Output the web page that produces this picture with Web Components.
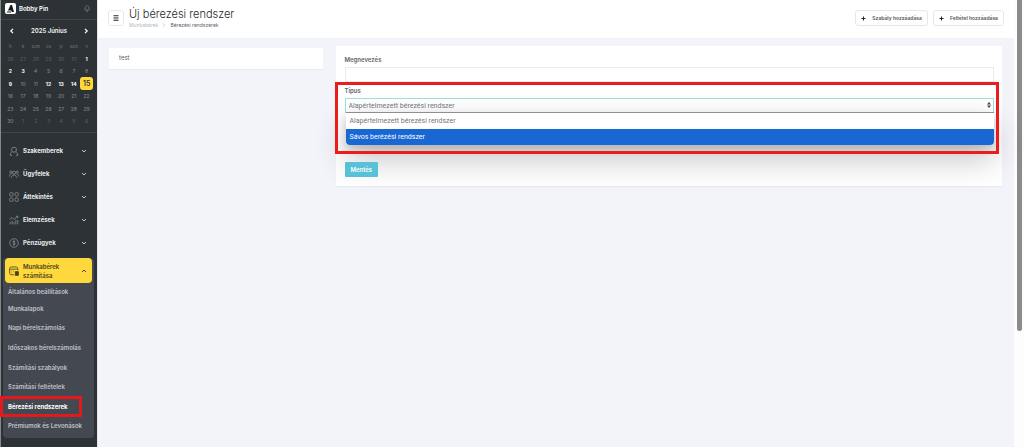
<!DOCTYPE html>
<html lang="hu">
<head>
<meta charset="utf-8">
<title>Új bérezési rendszer</title>
<style>
html,body{margin:0;height:100%;overflow:hidden}
body{font:6px/10px Inter,"Liberation Sans",sans-serif;color:#5b6064;background:#fff}
</style>
</head>
<body>
<app-shell>
  <side-bar slot="side"></side-bar>
  <page-header slot="head" heading="Új bérezési rendszer"></page-header>
  <info-card>test</info-card>
  <wage-form></wage-form>
</app-shell>
<script>
const define = (name, html, setup) => customElements.define(name, class extends HTMLElement {
  connectedCallback() {
    if (this.shadowRoot) return;
    const root = this.attachShadow({mode: 'open'});
    const t = document.createElement('template');
    t.innerHTML = '<style>*{box-sizing:border-box}button,input,select{font:inherit;color:inherit;margin:0}</style>' + html;
    root.append(t.content.cloneNode(true));
    if (setup) setup(this, root);
  }
});

define('app-shell', `
<style>
:host{display:flex;height:100vh;overflow:hidden}
.side{flex:none;width:98px;background:#2d3236;border-left:1px solid #85898c;border-right:1px solid #e4e5ea}
.page{flex:1;min-width:0;display:flex;flex-direction:column;background:#f3f4f9}
main{display:grid;grid-template-columns:repeat(4,minmax(0,1fr));gap:13px;padding:8px 12px 0 11px;align-items:start}
.track{flex:none;width:10px;background:#fdfdfd;padding:0 2px 0 3px}
.thumb{height:74vh;background:#8b8b8b;border-radius:0 0 3px 3px}
</style>
<div class="side"><slot name="side"></slot></div>
<div class="page"><slot name="head"></slot><main><slot></slot></main></div>
<div class="track"><div class="thumb"></div></div>`);

define('month-calendar', `
<style>
:host{display:block;padding:5px 4px 5px 3px;border-bottom:1px solid #3f4448}
header{display:flex;justify-content:space-between;align-items:center;height:12px;padding:0 4px 0 5px;color:#f2f2f3;font-size:6px;font-weight:600}
button{border:0;background:none;padding:0;width:6px;height:10px;display:flex;align-items:center;justify-content:center}
svg{width:6px;height:6px;fill:none;stroke:#fff;stroke-width:1.2}
table{width:100%;table-layout:fixed;border-collapse:collapse;text-align:center;margin-top:2px;color:#7d8287}
th,td{padding:0;height:13px;font-size:5px;font-weight:500;line-height:12px}
th{color:#63686d}
tr:nth-child(even) td{height:12px}
.out{color:#555a5f}
.on{color:#fff;font-weight:700}
.today{color:#33322a;font-weight:600;font-size:7px;background:#ffd83d;border-radius:3px}
</style>
<header><button aria-label="Előző hónap"><svg viewBox="0 0 6 6"><path d="M4 .8 1.8 3 4 5.2"/></svg></button><span>2025 Június</span><button aria-label="Következő hónap"><svg viewBox="0 0 6 6"><path d="M2 .8 4.2 3 2 5.2"/></svg></button></header>
<table><thead><tr><th>h</th><th>k</th><th>sze</th><th>cs</th><th>p</th><th>szo</th><th>v</th></tr></thead><tbody></tbody></table>`, (el, root) => {
  const days = [26,27,28,29,30,31];
  for (let d = 1; d <= 30; d++) days.push(d);
  days.push(1,2,3,4,5,6);
  const bold = [1,2,3,9,12,13,14];
  const body = root.querySelector('tbody');
  for (let r = 0; r < 6; r++) {
    const tr = body.insertRow();
    for (let c = 0; c < 7; c++) {
      const i = r * 7 + c, td = tr.insertCell();
      td.textContent = days[i];
      td.className = i < 6 || i > 35 ? 'out' : days[i] === 15 ? 'today' : bold.includes(days[i]) ? 'on' : '';
    }
  }
});

const icons = {
  user: '<circle cx="8" cy="6" r="4"/><path d="M5.500 9.500C3 10 2 11.500 2 15h3M10.500 9.500C13 10 14 11.500 14 15h-3"/>',
  users: '<circle cx="8" cy="6" r="2.500"/><circle cx="3" cy="5" r="1.800"/><circle cx="13" cy="5" r="1.800"/><path d="M4 14c0-6 8-6 8 0M.6 12c0-3 1-4 3-4M15.400 12c0-3-1-4-3-4"/>',
  grid: '<rect x="1" y="1" width="5.500" height="5.500" rx="2"/><rect x="9.500" y="1" width="5.500" height="5.500" rx="2"/><rect x="1" y="9.500" width="5.500" height="5.500" rx="2"/><rect x="9.500" y="9.500" width="5.500" height="5.500" rx="2"/>',
  chart: '<path d="M1 7l4-3 3 3 6-5M11 2h3v3M2 15v-4M5 15V9M8 15v-4M11 15V8M14 15V8"/>',
  coin: '<circle cx="8" cy="8" r="6.800"/><path d="M10 5.800C8.500 4.500 6 5 6.200 6.700c.2 1.600 3.600 1 3.700 2.700.1 1.600-2.600 2-4 .7M8 3.800v8.400"/>',
  payroll: '<path d="M14 7V4c0-1.500-1-2.500-2.500-2.500h-8C2 1.500 1 2.500 1 4v7.500C1 13 2 14 3.500 14H8M1 5h13M4 8h1M7 8h1M4 11h1"/><path d="M10 9h5v6h-5z" fill="currentColor"/>'
};

define('nav-item', `
<style>
:host{display:block}
button{display:flex;align-items:center;width:100%;height:23px;padding:0 5px 0 4px;border:0;background:none;color:#e9eaeb;font-size:6px;line-height:9px;font-weight:700;text-align:left;border-radius:4px}
.icon{width:10px;height:10px;margin-right:4px;flex:none;fill:none;stroke:#868b90;stroke-width:1.3;color:#4c431b}
.label{flex:1}
.chev{width:6px;height:6px;fill:none;stroke:#c4c7c9;stroke-width:1}
:host([open]) button{height:25px;background:#ffd83d;color:#4c431b;font-weight:600}
:host([open]) .icon,:host([open]) .chev{stroke:#4c431b}
:host([open]) .chev{transform:rotate(180deg)}
</style>
<button><svg class="icon" viewBox="0 0 16 16"></svg><span class="label"><slot></slot></span><svg class="chev" viewBox="0 0 6 6"><path d="M1 2l2 2 2-2"/></svg></button>`, (el, root) => {
  root.querySelector('.icon').innerHTML = icons[el.getAttribute('icon')];
  root.querySelector('button').setAttribute('aria-expanded', el.hasAttribute('open'));
});

define('side-bar', `
<style>
:host{display:block}
.brand{display:flex;align-items:center;height:20px;padding:0 7px 2px 2px;border-bottom:1px solid #3f4448;color:#fff;font-size:6px;font-weight:600}
.logo{width:11px;height:11px;margin:0 3px 0 2px}
.name{flex:1}
.bell{width:6px;height:7px;fill:none;stroke:#666b70}
nav{padding:6px 3px 0 2px}
nav>nav-item{padding:0 2px}
.group{background:#444850;border-radius:4px;margin-top:4px}
.group nav-item{padding:0 2px}
ul{list-style:none;margin:0;padding:0 0 2px}
li{position:relative;height:20px;display:flex;align-items:center;padding-left:5px}
li:nth-child(1){height:17px}
li:nth-child(2){height:18px}
li:nth-child(n+5):nth-child(odd){height:19px}
a{color:#c0c3c9;text-decoration:none;font-size:6px;font-weight:600;white-space:nowrap}
a[aria-current]{color:#fff;font-weight:700}
.mark{position:absolute;left:-3px;top:-1px;width:82px;height:21px;border:3px solid #e3191e}
</style>
<div class="brand"><svg class="logo" viewBox="0 0 11 11"><rect width="11" height="11" rx="2" fill="#fff"/><path d="M5.500 2 3 7.500h3L7 9h2L7 2z" fill="#17191b"/><path d="M2 9h4" stroke="#17191b"/></svg><span class="name">Bobby Pin</span><svg class="bell" viewBox="0 0 6 7"><path d="M1 5V3c0-3 4-3 4 0v2zM2 6.300h2"/></svg></div>
<month-calendar></month-calendar>
<nav>
<nav-item icon="user">Szakemberek</nav-item>
<nav-item icon="users">Ügyfelek</nav-item>
<nav-item icon="grid">Áttekintés</nav-item>
<nav-item icon="chart">Elemzések</nav-item>
<nav-item icon="coin">Pénzügyek</nav-item>
<div class="group">
<nav-item icon="payroll" open>Munkabérek<br>számítása</nav-item>
<ul><li><a href="#">Általános beállítások</a></li><li><a href="#">Munkalapok</a></li><li><a href="#">Napi bérelszámolás</a></li><li><a href="#">Időszakos bérelszámolás</a></li><li><a href="#">Számítási szabályok</a></li><li><a href="#">Számítási feltételek</a></li><li><a href="#" aria-current="page">Bérezési rendszerek</a><span class="mark"></span></li><li><a href="#">Prémiumok és Levonások</a></li></ul>
</div>
</nav>`);

define('outline-button', `
<style>
:host{display:block}
button{display:flex;align-items:center;gap:5px;height:16px;padding:0 5px;background:#fff;border:1px solid #e6e7eb;border-radius:3px;font-size:5px;font-weight:600;color:#55595d;white-space:nowrap}
svg{width:5px;height:5px;stroke:#222;stroke-width:1;margin-right:1px}
</style>
<button><svg viewBox="0 0 5 5"><path d="M2.500 .5v4M.5 2.500h4"/></svg><slot></slot></button>`);

define('page-header', `
<style>
:host{display:flex;align-items:flex-start;height:38px;background:#fff;padding:0 10px}
.menu{width:16px;height:16px;margin:10px 5px 0 0;padding:0;display:flex;align-items:center;justify-content:center;background:#fff;border:1px solid #e6e7eb;border-radius:3px}
.menu svg{width:6px;height:6px;stroke:#55595d;stroke-width:1}
.title{flex:1;padding-top:7px}
h1{margin:0;font-size:11px;line-height:14px;font-weight:300;color:#24282c}
ol{display:flex;align-items:center;gap:4px;list-style:none;margin:0;padding:0;font-size:5px;line-height:8px;font-weight:400}
a{color:#b5b9c0;text-decoration:none}
ol svg{display:block;width:4px;height:4px;fill:none;stroke:#b9bcc2;stroke-width:.7}
li{color:#5c6166}
.actions{display:flex;gap:5px;padding-top:10px}
</style>
<button class="menu" aria-label="Menü"><svg viewBox="0 0 6 6"><path d="M.5 .5h5M.5 2.200h5M.5 3.900h5M.5 5.500h5"/></svg></button>
<div class="title"><h1></h1><ol><li><a href="#">Munkabérek</a></li><li aria-hidden="true"><svg viewBox="0 0 4 4"><path d="M1.200.4 2.800 2 1.200 3.600"/></svg></li><li>Bérezési rendszerek</li></ol></div>
<div class="actions"><outline-button>Szabály hozzáadása</outline-button><outline-button>Feltétel hozzáadása</outline-button></div>`, (el, root) => {
  root.querySelector('h1').textContent = el.getAttribute('heading');
});

define('info-card', `
<style>:host{display:block;margin-top:2px;background:#fff;padding:5px 10px 6px;box-shadow:0 1px 1px #e9eaef}</style><slot></slot>`);

define('wage-form', `
<style>
:host{display:block;grid-column:span 3;position:relative;background:#fff;padding:9px 8px 9px 9px;box-shadow:0 1px 1px #e9eaef}
form{display:block}
label{display:block;font-weight:600;line-height:10px;margin-bottom:2px;color:#606468}
.text,select{display:block;width:100%;height:15px;border:1px solid #eaebee;border-radius:0;background:#fff;outline:0;padding:0 3px}
.text{margin-bottom:4px}
.field{position:relative}
select,.list{font-family:Roboto,Inter,sans-serif;font-size:7px;color:#74777b}
select{appearance:none;border-color:#9fe0d8}
.arrows{position:absolute;right:3px;top:16px;width:4px;height:6px;fill:#444}
.list{position:absolute;z-index:1;left:1px;right:0;top:26px;margin:0;padding:0;list-style:none;background:#fff;border-top:1px solid #8f8f8f;border-radius:0 0 4px 4px;box-shadow:0 4px 8px rgba(0,0,0,.16),0 14px 32px rgba(0,0,0,.24)}
.list li{height:16px;line-height:16px;padding:0 4px}
.list li[aria-selected=true]{background:#1867d2;color:#fff;border-radius:0 0 4px 4px}
.save{display:block;position:relative;z-index:2;margin-top:49px;height:15px;padding:0 6px;border:0;border-radius:1px;background:#57c1d7;color:#fff;font-weight:600}
.mark{position:absolute;z-index:2;left:-1px;right:3px;top:36px;height:72px;border:3px solid #ec1c1c}
</style>
<form>
<label for="name">Megnevezés</label><input class="text" id="name">
<div class="field"><label for="type">Típus</label><select id="type"><option>Alapértelmezett bérezési rendszer</option><option>Sávos berézési rendszer</option></select>
<svg class="arrows" viewBox="0 0 4 6"><path d="M2 0 4 2.500H0zM2 6 0 3.500h4z"/></svg>
<ul class="list" role="listbox"><li role="option">Alapértelmezett bérezési rendszer</li><li role="option" aria-selected="true">Sávos berézési rendszer</li></ul></div>
<button type="button" class="save">Mentés</button>
</form>
<div class="mark"></div>`);
</script>
</body>
</html>
